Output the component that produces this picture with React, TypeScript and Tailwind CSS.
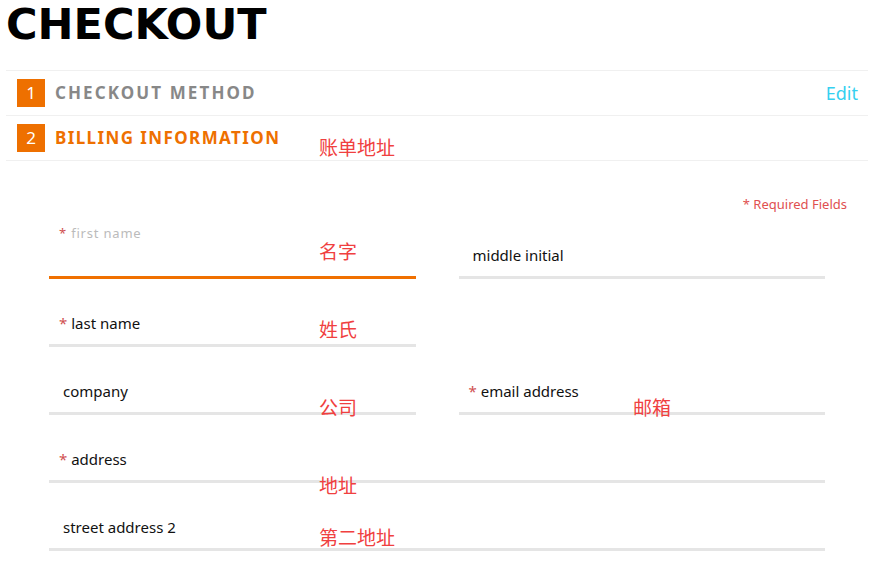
import React from 'react'

const FONT = '"Noto Sans", "Noto Sans CJK SC", sans-serif'

function Step({ n, label, active, edit }: { n: number; label: string; active?: boolean; edit?: boolean }) {
  return (
    <div className="flex h-[45px] items-center border-b border-[#f0f0f0] pl-[11px] pr-[10px]">
      <div className="flex h-[28px] w-[28px] items-center justify-center bg-[#ee7000] text-[17px] text-white">{n}</div>
      <div
        className={`ml-[10px] text-[17px] font-bold ${active ? 'tracking-[1.4px] text-[#ee7000]' : 'tracking-[2.1px] text-[#888888]'}`}
      >
        {label}
      </div>
      {edit && <div className="ml-auto text-[18px] text-[#35d0f0]">Edit</div>}
    </div>
  )
}

function Field({ label, required, focused, wide }: { label: string; required?: boolean; focused?: boolean; wide?: boolean }) {
  return (
    <div className={`flex h-[68px] flex-col justify-end ${wide ? 'col-span-2' : ''}`}>
      {focused ? (
        <div className="mb-auto pl-[10px] pt-[13px] text-[13px] tracking-[0.8px] text-[#bbbbbb]">
          <span className="text-[#d05050]">*</span> {label}
        </div>
      ) : (
        <div className="pb-[9px] pl-[10px] text-[15px] text-[#111111]">
          {required ? <span className="text-[#d05050]">* </span> : <span className="pl-[4px]" />}
          {label}
        </div>
      )}
      <div className={`h-[3px] ${focused ? 'bg-[#f07000]' : 'bg-[#e5e5e5]'}`} />
    </div>
  )
}

function Note({ text, x, y }: { text: string; x: number; y: number }) {
  return (
    <div className="pointer-events-none absolute text-[19px] leading-none text-[#f04040]" style={{ left: x, top: y }}>
      {text}
    </div>
  )
}

export default function App() {
  return (
    <div className="relative h-[561px] w-[877px] overflow-hidden bg-white" style={{ fontFamily: FONT }}>
      <h1 className="h-[52px] pl-[6px] font-['DejaVu_Sans',sans-serif] text-[43px] font-bold leading-[48px] text-black">
        CHECKOUT
      </h1>
      <div className="ml-[6px] mr-[9px] mt-[18px] border-t border-[#f0f0f0]">
        <Step n={1} label="CHECKOUT METHOD" edit />
        <Step n={2} label="BILLING INFORMATION" active />
      </div>
      <div className="pr-[30px] pt-[34px] text-right text-[13px] text-[#e05050]">* Required Fields</div>
      <div className="ml-[49px] mt-[-4px] grid w-[776px] grid-cols-2 gap-x-[43px]">
        <Field label="first name" required focused />
        <Field label="middle initial" />
        <Field label="last name" required />
        <div />
        <Field label="company" />
        <Field label="email address" required />
        <Field label="address" required wide />
        <Field label="street address 2" wide />
      </div>

      <Note text="账单地址" x={319} y={139} />
      <Note text="名字" x={319} y={243} />
      <Note text="姓氏" x={319} y={321} />
      <Note text="公司" x={319} y={399} />
      <Note text="邮箱" x={633} y={399} />
      <Note text="地址" x={319} y={477} />
      <Note text="第二地址" x={319} y={529} />
    </div>
  )
}
